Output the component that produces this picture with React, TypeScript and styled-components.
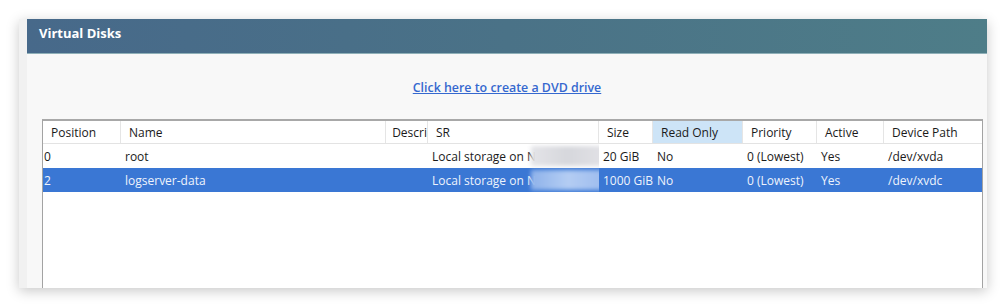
import styled, { createGlobalStyle } from "styled-components";

const GlobalStyle = createGlobalStyle`
  html, body {
    margin: 0;
    padding: 0;
    background: #ffffff;
    font-family: "Segoe UI", "Open Sans", "Noto Sans", sans-serif;
    font-size: 12px;
  }
`;

const Page = styled.div`
  width: 1008px;
  height: 307px;
  padding: 19px 0 0 19px;
  box-sizing: border-box;
  overflow: hidden;
`;

const Frame = styled.div`
  display: flex;
  width: 968px;
  height: 269px;
  background: #f3f3f3;
  box-shadow: 0 3px 12px rgba(0, 0, 0, 0.22);
`;

const Strip = styled.div`
  width: 8px;
  background: #f1f1f1;
`;

const Panel = styled.div`
  flex: 1;
  display: flex;
  flex-direction: column;
  background: #f8f8f8;
`;

const Header = styled.div`
  height: 35px;
  box-sizing: border-box;
  padding: 6px 0 0 12px;
  background: linear-gradient(90deg, #47698a 0%, #4a7287 50%, #4e7d88 100%);
  border-bottom: 1px solid #8fb0b8;
  color: #ffffff;
  font-weight: 700;
  font-size: 13px;
  line-height: 16px;
`;

const LinkRow = styled.div`
  display: flex;
  justify-content: center;
  padding: 25px 0 23px;
`;

const Link = styled.a`
  color: #3568cf;
  font-weight: 600;
  font-size: 12.4px;
  line-height: 17px;
  text-decoration: underline;
  cursor: pointer;
`;

const Table = styled.div`
  flex: 1;
  margin: 0 4px 0 15px;
  background: #ffffff;
  border: 1px solid #a3a3a3;
  border-top: 2px solid #a8a8a8;
  border-bottom: none;
  color: #1a1a1a;
`;

const COLS = "78px 265px 42px 171px 54px 90px 74px 67px 1fr";

const HeadRow = styled.div`
  display: grid;
  grid-template-columns: ${COLS};
  height: 22px;
  border-bottom: 1px solid #e3e3e3;
`;

const HeadCell = styled.div<{ $hot?: boolean; $clip?: boolean }>`
  display: flex;
  align-items: center;
  padding-left: ${(p) => (p.$clip ? "0" : "8px")};
  justify-content: ${(p) => (p.$clip ? "flex-end" : "flex-start")};
  border-right: 1px solid #e5e5e5;
  background: ${(p) => (p.$hot ? "#cde4f7" : "transparent")};
  white-space: nowrap;
  overflow: hidden;
  &:last-child {
    border-right: none;
  }
`;

const Row = styled.div<{ $selected?: boolean }>`
  display: grid;
  grid-template-columns: ${COLS};
  height: 24px;
  background: ${(p) => (p.$selected ? "#3a77d4" : "transparent")};
  color: ${(p) => (p.$selected ? "#eef3fc" : "#1a1a1a")};
`;

const Cell = styled.div<{ $tight?: boolean }>`
  display: flex;
  align-items: center;
  padding-left: ${(p) => (p.$tight ? "1px" : "4px")};
  white-space: nowrap;
  overflow: hidden;
`;

const Redact = styled.span<{ $selected?: boolean }>`
  display: inline-block;
  flex: none;
  width: 74px;
  height: 20px;
  margin-left: -5px;
  background: ${(p) =>
    p.$selected
      ? "linear-gradient(90deg, #8fb2ea, #b4cdf3 50%, #9dbcee)"
      : "linear-gradient(90deg, #e4e4e8, #d6d7dc 50%, #e2e2e6)"};
  filter: blur(2px);
`;

const headers = [
  "Position",
  "Name",
  "Descri",
  "SR",
  "Size",
  "Read Only",
  "Priority",
  "Active",
  "Device Path",
];

const disks = [
  { pos: "0", name: "root", size: "20 GiB", ro: "No", prio: "0 (Lowest)", active: "Yes", dev: "/dev/xvda", selected: false },
  { pos: "2", name: "logserver-data", size: "1000 GiB", ro: "No", prio: "0 (Lowest)", active: "Yes", dev: "/dev/xvdc", selected: true },
];

const App = () => {
  return (
    <>
      <GlobalStyle />
      <Page>
        <Frame>
          <Strip />
          <Panel>
            <Header>Virtual Disks</Header>
            <LinkRow>
              <Link>Click here to create a DVD drive</Link>
            </LinkRow>
            <Table>
              <HeadRow>
                {headers.map((h) => (
                  <HeadCell key={h} $hot={h === "Read Only"} $clip={h === "Descri"}>
                    {h}
                  </HeadCell>
                ))}
              </HeadRow>
              {disks.map((d) => (
                <Row key={d.pos} $selected={d.selected}>
                  <Cell $tight>{d.pos}</Cell>
                  <Cell>{d.name}</Cell>
                  <Cell />
                  <Cell>
                    Local storage on N
                    <Redact $selected={d.selected} />
                  </Cell>
                  <Cell>{d.size}</Cell>
                  <Cell>{d.ro}</Cell>
                  <Cell>{d.prio}</Cell>
                  <Cell>{d.active}</Cell>
                  <Cell>{d.dev}</Cell>
                </Row>
              ))}
            </Table>
          </Panel>
        </Frame>
      </Page>
    </>
  );
};

export default App;
